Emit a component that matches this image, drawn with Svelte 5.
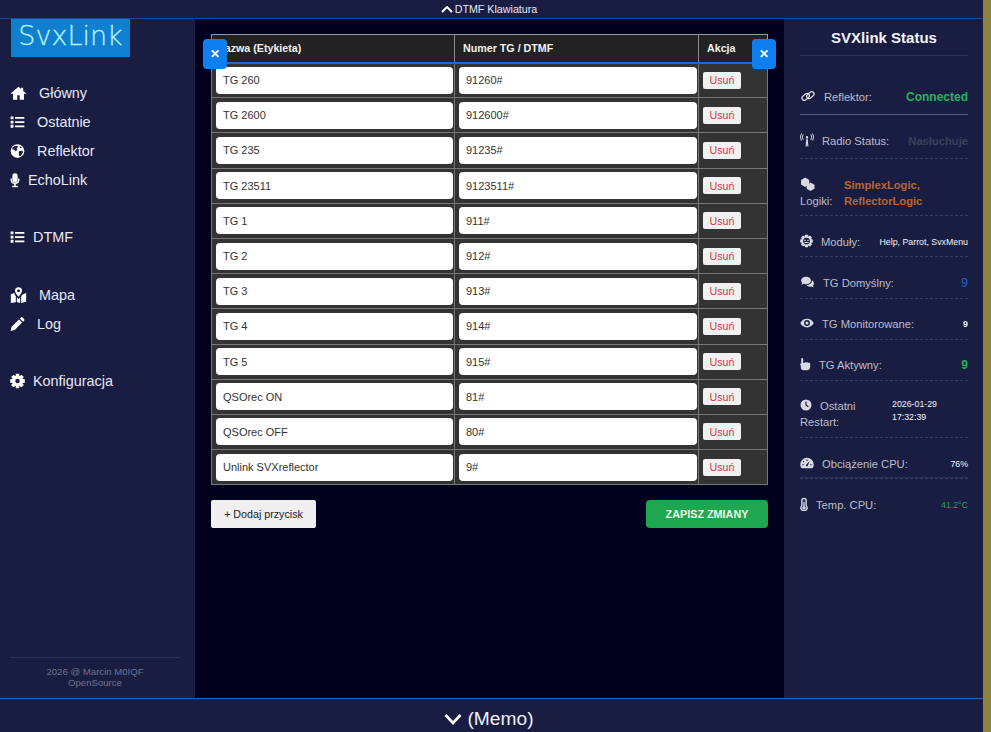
<script lang="ts">
  // gear outline, 8 teeth, for the settings icon
  function gear(cx: number, cy: number, outer: number, inner: number, hole: number) {
    let d = "";
    for (let i = 0; i < 8; i++) {
      const a = (i * Math.PI) / 4;
      const p = (r: number, o: number) =>
        `${(cx + r * Math.cos(a + o)).toFixed(2)} ${(cy + r * Math.sin(a + o)).toFixed(2)}`;
      d += `${i ? "L" : "M"}${p(inner, -0.36)}L${p(outer, -0.22)}L${p(outer, 0.22)}L${p(inner, 0.36)}`;
    }
    d += `Z M${cx - hole} ${cy}a${hole} ${hole} 0 1 0 ${hole * 2} 0a${hole} ${hole} 0 1 0 ${-hole * 2} 0Z`;
    return d;
  }

  const listIcon = `<path d="M1 3h4.500v4.500H1zM1 9.800h4.500v4.500H1zM1 16.500h4.500V21H1zM8 4H23v2.800H8zM8 10.700H23v2.800H8zM8 17.400H23v2.800H8z"/>`;

  const icons: Record<string, string> = {
    home: `<path d="M12 2.500.6 12.400l1.400 1.600L3.800 12.500V22h6.400v-6.500h3.600V22h6.400v-9.500l1.800 1.500 1.400-1.600L19 8.900V4h-3.200v2.100z"/>`,
    list: listIcon,
    globe: `<path fill-rule="evenodd" d="M12 1a11 11 0 1 0 0 22 11 11 0 0 0 0-22zM7 4.500l4.500-1 1.500 2-2.500 2 1.500 2.500-3 2.500-2.500-2.500-3-1 .8-3zM14 12.500l5.500-1 1.500 2-3.500 6-2.500 1-1-4.500zM15.500 4l3.500 2.500-3 1z"/>`,
    mic: `<path d="M12 1a4.200 4.200 0 0 0-4.200 4.200v6a4.200 4.200 0 0 0 8.400 0v-6A4.200 4.200 0 0 0 12 1z"/><path d="M4.800 9.500v1.700a7.200 7.200 0 0 0 5.900 7.100V21H7.500v2.500h9V21h-3.200v-2.700a7.200 7.200 0 0 0 5.900-7.100V9.500h-2.400v1.700a4.800 4.800 0 0 1-9.600 0V9.500z"/>`,
    map: `<path fill-rule="evenodd" d="M12 .5a5.300 5.300 0 0 0-5.300 5.300c0 2.600 3.600 7 5.300 9 1.700-2 5.300-6.400 5.300-9A5.300 5.300 0 0 0 12 .5zM12 3.600a2.200 2.200 0 1 1 0 4.400 2.200 2.200 0 0 1 0-4.400z"/><path d="M.5 11 5.700 9l.8 2.500 1.500 2.300V23l-7.500 1zM9.500 15.500l2.500 2.500 2.500-2.500V24l-5-1.500zM16 13.800l1.500-2.300 6-2.500v13L16 24z"/>`,
    pencil: `<path d="M2.500 16.500 14.300 4.700l5 5L7.500 21.500 1 23zM15.800 3.200l1.600-1.600a2 2 0 0 1 2.800 0l2.200 2.200a2 2 0 0 1 0 2.800l-1.600 1.600z"/>`,
    cog: `<path fill-rule="evenodd" d="${gear(12, 12, 12, 8.6, 3.6)}"/>`,
    link: `<g fill="none" stroke="currentColor" stroke-width="2.100"><rect x="1" y="9.500" width="14" height="8" rx="4" transform="rotate(-40 8 13.500)"/><rect x="9" y="6.500" width="14" height="8" rx="4" transform="rotate(-40 16 10.500)"/></g>`,
    tower: `<path d="M11 9h2l1.500 14h-1.900l-.2-3h-.8l-.2 3H9.500z"/><circle cx="12" cy="7" r="2"/><g fill="none" stroke="currentColor" stroke-width="1.700"><path d="M5.500 2.500a8 8 0 0 0 0 9M2.500 1a11 11 0 0 0 0 12M18.500 2.500a8 8 0 0 1 0 9M21.500 1a11 11 0 0 1 0 12"/></g>`,
    cubes: `<path d="M8 1l7 4v8l-7 4-7-4V5z"/><path d="M17 9.500l7 3.700v7.100L17 24l-6.500-3.700v-6l4-2.200z"/>`,
    chip: `<path fill-rule="evenodd" d="${gear(12, 12, 12, 9.6, 6.2)}"/><path d="M8 9.500h2.500V12H8zM13.500 9.500H16V12h-2.500zM8 14h8v1.500H8z"/>`,
    comments: `<path d="M9.500 3C4.800 3 1 5.800 1 9.300c0 1.500.7 2.800 1.800 3.900L1.500 16.500l4.300-1.400c1.100.4 2.400.7 3.700.7 4.700 0 8.500-2.900 8.500-6.500S14.200 3 9.500 3z"/><path d="M19.500 9.500c.2 4.600-4.100 7.800-9 8.100 1.300 1.600 3.500 2.600 6 2.600.9 0 1.700-.1 2.400-.4l3.600 1.200-1.100-2.800c1.100-1 1.700-2.300 1.700-3.700 0-1.900-1.100-3.400-2.600-5z"/>`,
    eye: `<path fill-rule="evenodd" d="M12 4.500C6.500 4.500 2.300 8 .5 12c1.800 4 6 7.500 11.500 7.500S21.700 16 23.500 12C21.700 8 17.500 4.500 12 4.500zM12 7a5 5 0 1 1 0 10 5 5 0 0 1 0-10z"/><circle cx="12" cy="12" r="2.600"/>`,
    hand: `<path d="M7 1a1.800 1.800 0 0 1 1.800 1.800V10h1.700l2-1.300c1-.4 1.800 0 2.300.8l1.500-.5c1-.2 1.800.3 2.200 1l1.200-.2c1.100 0 1.800.8 1.800 2V17c0 3.600-2.500 6.500-6 6.500H9c-2.500 0-4.500-2-4.500-4.500v-4.200H3.500V11h1.700V2.800A1.800 1.800 0 0 1 7 1z"/>`,
    clock: `<path fill-rule="evenodd" d="M12 1a11 11 0 1 0 0 22 11 11 0 0 0 0-22zM10.800 5h2.400v6.500l4.300 3-1.400 2-5.300-3.800z"/>`,
    gauge: `<path fill-rule="evenodd" d="M12 3A11.500 11.500 0 0 0 .5 14.500c0 2.100.5 4 1.500 5.700.3.500.9.800 1.500.8h17c.6 0 1.200-.3 1.500-.8 1-1.700 1.500-3.600 1.500-5.700A11.500 11.500 0 0 0 12 3zM10.500 17a2 2 0 0 1 .5-2.600l5.500-6-3 7.700a2 2 0 0 1-3 .9zM4 14h2.500v2H4zM17.500 14H20v2h-2.500zM6 8l1.800 1.800-1.400 1.400-1.800-1.800zM11 6h2v2.500h-2z"/>`,
    therm: `<path fill-rule="evenodd" d="M12 1a5 5 0 0 0-5 5v8.500a6.500 6.500 0 1 0 10 0V6a5 5 0 0 0-5-5zM12 3.500A2.500 2.500 0 0 1 14.500 6v9.500a4 4 0 1 1-5 0V6A2.500 2.500 0 0 1 12 3.500z"/><path d="M10.800 8h2.400v8.500a2.800 2.800 0 1 1-2.400 0z"/>`,
  };

  // tighter viewBox for the narrow glyphs, so they keep their height
  const viewBoxes: Record<string, string> = {
    mic: "4 0 16 24",
    therm: "5 0 14 24",
    hand: "3 0 20 24",
  };
  const vb = (name: string) => viewBoxes[name] ?? "0 0 24 24";

  const nav = [
    { icon: "home", label: "Główny", w: 17 },
    { icon: "list", label: "Ostatnie", w: 15 },
    { icon: "globe", label: "Reflektor", w: 15 },
    { icon: "mic", label: "EchoLink", w: 10, tight: true },
    { icon: "list", label: "DTMF", w: 15, sep: true, tight: true },
    { icon: "map", label: "Mapa", w: 17, sep: true },
    { icon: "pencil", label: "Log", w: 15 },
    { icon: "cog", label: "Konfiguracja", w: 15, sep: true, tight: true },
  ];

  let rows = $state([
    { name: "TG 260", code: "91260#" },
    { name: "TG 2600", code: "912600#" },
    { name: "TG 235", code: "91235#" },
    { name: "TG 23511", code: "9123511#" },
    { name: "TG 1", code: "911#" },
    { name: "TG 2", code: "912#" },
    { name: "TG 3", code: "913#" },
    { name: "TG 4", code: "914#" },
    { name: "TG 5", code: "915#" },
    { name: "QSOrec ON", code: "81#" },
    { name: "QSOrec OFF", code: "80#" },
    { name: "Unlink SVXreflector", code: "9#" },
  ]);

  const status = [
    { icon: "link", w: 16, label: "Reflektor:", value: "Connected", cls: "green strong", first: true },
    { icon: "tower", w: 14, label: "Radio Status:", value: "Nasłuchuje", cls: "idle strong" },
    { icon: "cubes", w: 15, label: "Logiki:", value: "SimplexLogic,\nReflectorLogic", cls: "logic strong", wrap: "wrap-logic" },
    { icon: "chip", w: 13, label: "Moduły:", value: "Help, Parrot, SvxMenu", cls: "small" },
    { icon: "comments", w: 15, label: "TG Domyślny:", value: "9", cls: "blue" },
    { icon: "eye", w: 14, label: "TG Monitorowane:", value: "9", cls: "small bold" },
    { icon: "hand", w: 11, label: "TG Aktywny:", value: "9", cls: "green strong" },
    { icon: "clock", w: 12, label: "Ostatni Restart:", value: "2026-01-29\n17:32:39", cls: "small dates", wrap: "wrap-date" },
    { icon: "gauge", w: 14, label: "Obciążenie CPU:", value: "76%", cls: "small", bar: true },
    { icon: "therm", w: 8, label: "Temp. CPU:", value: "41.2°C", cls: "small temp", last: true },
  ];
</script>

<div class="shell">
  <header class="topbar">
    <svg class="chev-up" viewBox="0 0 12 7" width="12" height="7"><path d="M1 6l5-5 5 5" /></svg>
    DTMF Klawiatura
  </header>

  <div class="middle">
    <aside class="sidebar">
      <div class="logo">SvxLink</div>
      <nav class="nav">
        {#each nav as item}
          <a href="#top" class="nav-item" class:sep={item.sep} class:tight={item.tight}>
            <svg viewBox={vb(item.icon)} height="16" width={item.w} fill="currentColor">{@html icons[item.icon]}</svg>
            {item.label}
          </a>
        {/each}
      </nav>
      <footer class="side-foot">
        <div>2026 @ Marcin M0IQF</div>
        <div>OpenSource</div>
      </footer>
    </aside>

    <main class="main">
      <div class="editor">
        <button class="close left" aria-label="Zamknij">✕</button>
        <button class="close right" aria-label="Zamknij">✕</button>
        <table>
          <thead>
            <tr>
              <th class="c-name">Nazwa (Etykieta)</th>
              <th class="c-code">Numer TG / DTMF</th>
              <th>Akcja</th>
            </tr>
          </thead>
          <tbody>
            {#each rows as row, i}
              <tr>
                <td><input type="text" bind:value={row.name} /></td>
                <td><input type="text" bind:value={row.code} /></td>
                <td><button class="del" onclick={() => rows.splice(i, 1)}>Usuń</button></td>
              </tr>
            {/each}
          </tbody>
        </table>
        <div class="actions">
          <button class="add" onclick={() => rows.push({ name: "", code: "" })}>+ Dodaj przycisk</button>
          <button class="save">ZAPISZ ZMIANY</button>
        </div>
      </div>
    </main>

    <aside class="status">
      <h2>SVXlink Status</h2>
      <div class="stat-list">
        {#each status as s}
          <div class="stat {s.wrap ?? ''}" class:first={s.first} class:last={s.last} class:bar={s.bar}>
            <span class="lbl">
              <svg viewBox={vb(s.icon)} height="14" width={s.w} fill="currentColor">{@html icons[s.icon]}</svg>{s.label}
            </span>
            <span class="val {s.cls}">{s.value}</span>
          </div>
        {/each}
      </div>
    </aside>
  </div>

  <footer class="bottombar">
    <svg class="chev-down" viewBox="0 0 18 12" width="18" height="12"><path d="M1.500 2l7.500 8 7.500-8" /></svg>
    (Memo)
  </footer>
</div>

<style>
  :global(body) {
    background: #8f8344;
    font-family: "Liberation Sans", Arial, sans-serif;
  }

  .shell {
    display: flex;
    flex-direction: column;
    width: 983px;
    height: 732px;
    background: #191d42;
    color: #e6e8f5;
  }

  .topbar {
    display: flex;
    justify-content: center;
    align-items: center;
    gap: 2px;
    height: 18px;
    flex: none;
    padding-right: 5px;
    border-bottom: 1px solid #1c4a90;
    font-size: 10.7px;
    color: #e6e8f5;
  }

  .chev-up {
    fill: none;
    stroke: #fff;
    stroke-width: 2;
  }

  .middle {
    display: flex;
    flex: 1;
    min-height: 0;
  }

  .sidebar {
    display: flex;
    flex-direction: column;
    width: 195px;
    flex: none;
    box-sizing: border-box;
    padding: 0 15px 10px 10px;
  }

  .logo {
    width: 119px;
    height: 38px;
    margin-left: 1px;
    background: #0f7fd0;
    color: #b9f2f5;
    font-family: "DejaVu Sans", sans-serif;
    font-weight: 200;
    font-size: 27px;
    line-height: 34px;
    text-align: center;
    -webkit-text-stroke: 0.3px #b9f2f5;
  }

  .nav {
    display: flex;
    flex-direction: column;
    margin-top: 21px;
  }

  .nav-item {
    display: flex;
    align-items: center;
    gap: 12px;
    height: 29px;
    color: #e6e8f5;
    font-size: 14.4px;
    text-decoration: none;
  }

  .nav-item.tight {
    gap: 8px;
  }

  .nav-item svg {
    color: #fff;
    flex: none;
  }

  .nav-item.sep {
    margin-top: 28.5px;
  }

  .side-foot {
    margin-top: auto;
    padding-top: 8px;
    border-top: 1px solid #2c3054;
    font-size: 9.6px;
    line-height: 11px;
    text-align: center;
    color: #70738c;
  }

  .main {
    flex: 1;
    min-width: 0;
    background: #02021e;
    padding: 15px 16px 0;
  }

  .editor {
    position: relative;
  }

  .close {
    position: absolute;
    top: 5px;
    width: 24px;
    height: 30px;
    padding: 0;
    border: none;
    border-radius: 4px;
    background: #0d7ff0;
    color: #fff;
    font-size: 12px;
    font-weight: bold;
    z-index: 2;
  }

  .close.left {
    left: -8px;
  }

  .close.right {
    right: -8px;
  }

  table {
    width: 100%;
    table-layout: fixed;
    border-collapse: collapse;
    border: 1px solid #9a9a9a;
    background: #333;
  }

  th {
    height: 28px;
    box-sizing: border-box;
    padding: 0 8px;
    background: #222;
    border-left: 1px solid #8a8a8a;
    border-bottom: 2px solid #1d6cc0;
    color: #f2f2f2;
    font-size: 10.7px;
    text-align: left;
  }

  .c-name {
    width: 243px;
    padding-left: 5px;
  }

  .c-code {
    width: 244px;
  }

  td {
    height: 35.2px;
    padding: 0 1px 0 4px;
    border: 1px solid #777;
    box-sizing: border-box;
  }

  td input {
    display: block;
    width: 100%;
    height: 27px;
    box-sizing: border-box;
    padding: 0 7px;
    border: none;
    border-radius: 4px;
    background: #fff;
    color: #333;
    font-family: inherit;
    font-size: 11px;
    outline: none;
  }

  .del {
    display: block;
    width: 38px;
    height: 17px;
    padding: 0;
    border: none;
    border-radius: 2px;
    background: #f1f1f1;
    color: #dc3545;
    font-family: inherit;
    font-size: 10.7px;
  }

  .actions {
    display: flex;
    justify-content: space-between;
    margin-top: 15px;
  }

  .add {
    width: 105px;
    height: 28px;
    padding: 0;
    border: none;
    border-radius: 2px;
    background: #efefef;
    color: #222;
    font-family: inherit;
    font-size: 10.7px;
  }

  .save {
    width: 122px;
    height: 28px;
    padding: 0;
    border: none;
    border-radius: 4px;
    background: #1fa750;
    color: #e9fbe9;
    font-family: inherit;
    font-size: 10.8px;
    font-weight: bold;
  }

  .status {
    width: 199px;
    flex: none;
    box-sizing: border-box;
    padding: 10px 15px 0 16px;
    color: #bcbecb;
  }

  h2 {
    margin: 0;
    padding-bottom: 9px;
    border-bottom: 1px solid #2f3357;
    color: #f2f3f8;
    font-size: 15px;
    line-height: 17px;
    text-align: center;
  }

  .stat-list {
    display: flex;
    flex-direction: column;
    margin-top: 33px;
  }

  .stat {
    display: flex;
    justify-content: space-between;
    align-items: center;
    padding: 17.5px 0 6.7px;
    border-bottom: 1px dashed #3a3e60;
    font-size: 11.2px;
    line-height: 16px;
  }

  .stat.first {
    padding: 0 0 9px;
    border-bottom: 1px solid #5a5e7a;
  }

  .stat.first + .stat {
    padding-bottom: 9.5px;
  }

  .stat.last {
    border-bottom: none;
  }

  .stat.bar {
    box-shadow: inset 0 -4px 0 -3px #2c3054;
  }

  .lbl svg {
    vertical-align: -2px;
    margin-right: 8px;
    color: #d8d9e2;
  }

  .wrap-logic,
  .wrap-date {
    align-items: flex-start;
  }

  .wrap-logic .lbl {
    width: 44px;
    flex: none;
  }

  .wrap-date .lbl {
    width: 92px;
    flex: none;
  }

  .val {
    white-space: pre-line;
    text-align: right;
  }

  .wrap-logic .val,
  .wrap-date .val {
    flex: 1;
    text-align: left;
  }

  .strong {
    font-weight: bold;
  }

  .green {
    color: #1fb45c;
    font-size: 12px;
  }

  .idle {
    color: #3c4058;
  }

  .logic {
    color: #b8652c;
  }

  .blue {
    color: #1f66c8;
    font-size: 12px;
  }

  .small {
    font-size: 8.8px;
    color: #f2f3f8;
  }

  .bold {
    font-weight: bold;
  }

  .dates {
    line-height: 13px;
  }

  .temp {
    color: #1fa05a;
  }

  .bottombar {
    display: flex;
    justify-content: center;
    align-items: center;
    gap: 5px;
    flex: none;
    height: 34px;
    box-sizing: border-box;
    padding: 7px 5px 0 0;
    border-top: 1px solid #2a62b0;
    font-size: 19.2px;
    color: #f0f1f8;
  }

  .chev-down {
    fill: none;
    stroke: #fff;
    stroke-width: 2.6;
  }
</style>
